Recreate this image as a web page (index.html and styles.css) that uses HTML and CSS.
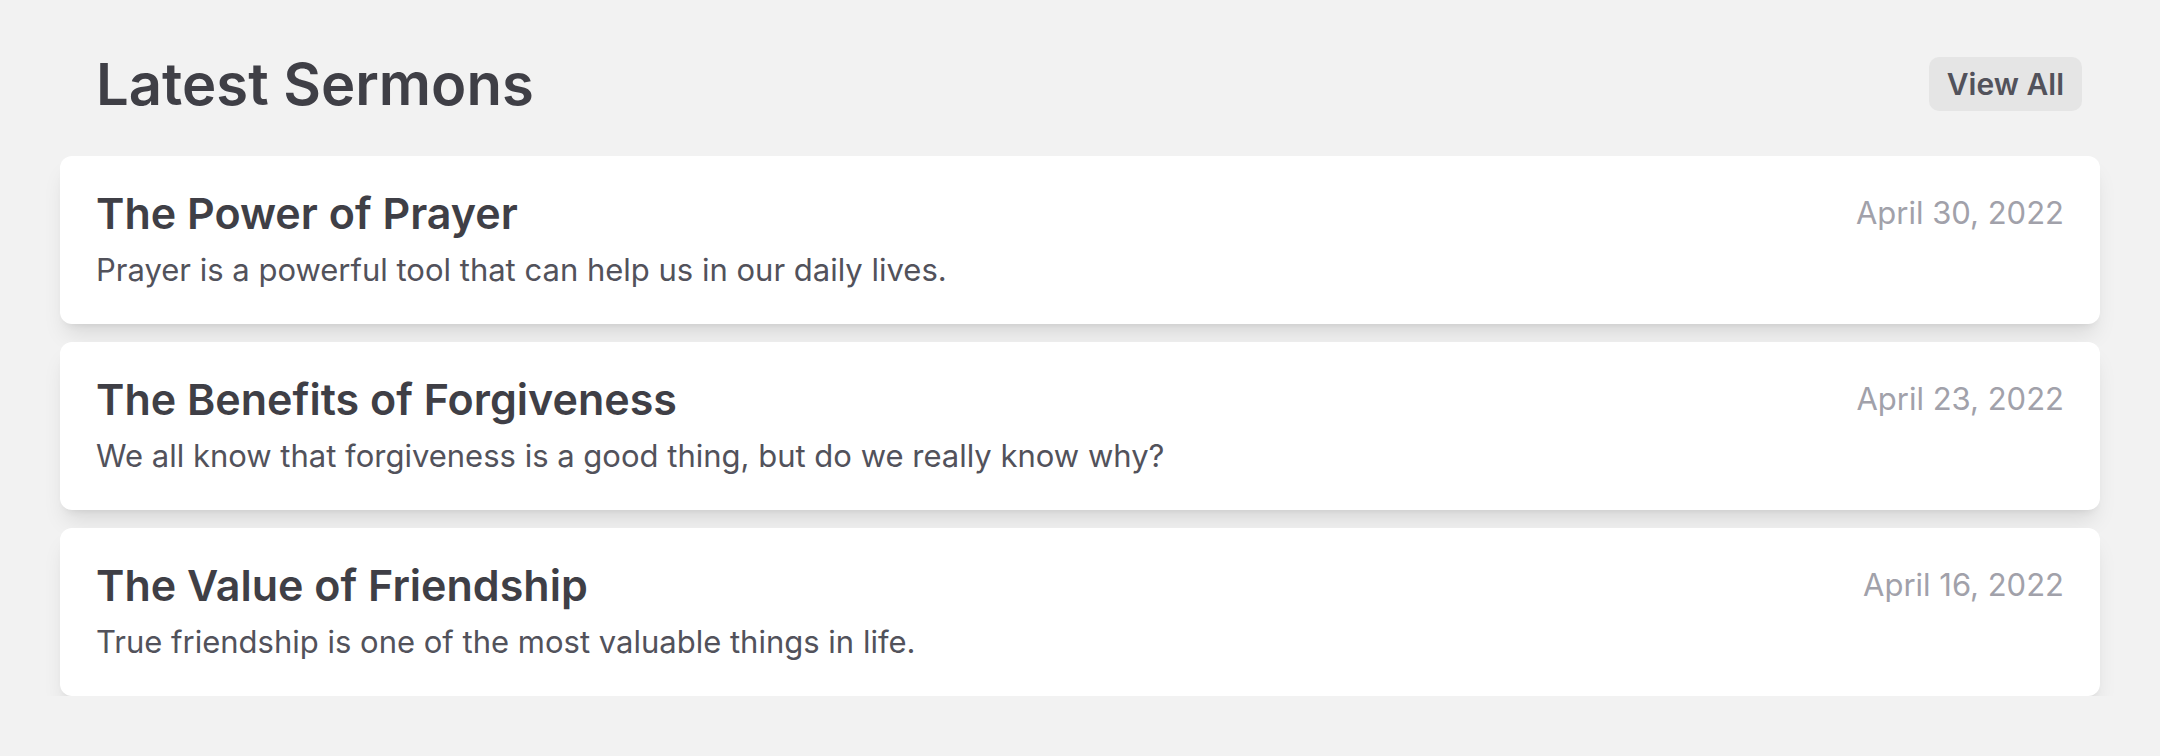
FILE: index.html
```html
<!DOCTYPE html>
<html lang="en">
<head>
<meta charset="utf-8">
<title>Latest Sermons</title>
<link rel="stylesheet" href="styles.css">
</head>
<body>
<main class="sermons">
  <header class="sermons-header">
    <h1 class="sermons-title">Latest Sermons</h1>
    <a class="view-all" href="#">View All</a>
  </header>
  <ul class="sermon-list">
    <li class="sermon-card">
      <div class="sermon-text">
        <h2 class="sermon-name">The Power of Prayer</h2>
        <p class="sermon-desc">Prayer is a powerful tool that can help us in our daily lives.</p>
      </div>
      <span class="sermon-date">April 30, 2022</span>
    </li>
    <li class="sermon-card">
      <div class="sermon-text">
        <h2 class="sermon-name">The Benefits of Forgiveness</h2>
        <p class="sermon-desc">We all know that forgiveness is a good thing, but do we really know why?</p>
      </div>
      <span class="sermon-date">April 23, 2022</span>
    </li>
    <li class="sermon-card">
      <div class="sermon-text">
        <h2 class="sermon-name">The Value of Friendship</h2>
        <p class="sermon-desc">True friendship is one of the most valuable things in life.</p>
      </div>
      <span class="sermon-date">April 16, 2022</span>
    </li>
  </ul>
</main>
</body>
</html>
```
FILE: styles.css
```css
* { box-sizing: border-box; }

html, body {
  margin: 0;
  padding: 0;
  background: #f2f2f2;
}

body {
  font-family: Inter, "Noto Sans", "Liberation Sans", sans-serif;
  color: #3f3f46;
}

.sermons {
  padding: 49px 60px 0 60px;
}

.sermons-header {
  display: flex;
  align-items: center;
  justify-content: space-between;
  height: 70px;
  padding: 0 18px 0 36px;
  margin-bottom: 37px;
}

.sermons-title {
  margin: 0;
  font-size: 58px;
  line-height: 70px;
  font-weight: 600;
  color: #3f3f46;
}

.view-all {
  display: inline-flex;
  align-items: center;
  justify-content: center;
  height: 54px;
  padding: 0 18px;
  border-radius: 10px;
  background: #e5e5e5;
  color: #52525b;
  font-size: 30px;
  font-weight: 600;
  text-decoration: none;
}

.sermon-list {
  list-style: none;
  margin: 0;
  padding: 0;
  display: flex;
  flex-direction: column;
  gap: 18px;
}

.sermon-card {
  display: flex;
  justify-content: space-between;
  align-items: flex-start;
  padding: 36px;
  background: #ffffff;
  border-radius: 12px;
  box-shadow: 0 15px 22px -5px rgba(0, 0, 0, 0.1), 0 6px 9px -6px rgba(0, 0, 0, 0.1);
}

.sermon-name {
  margin: 0;
  font-size: 43px;
  line-height: 42px;
  font-weight: 600;
  color: #3f3f46;
}

.sermon-desc {
  margin: 17px 0 0;
  font-size: 31px;
  line-height: 37px;
  color: #52525b;
}

.sermon-date {
  font-size: 31px;
  line-height: 42px;
  color: #a1a1aa;
}
```
